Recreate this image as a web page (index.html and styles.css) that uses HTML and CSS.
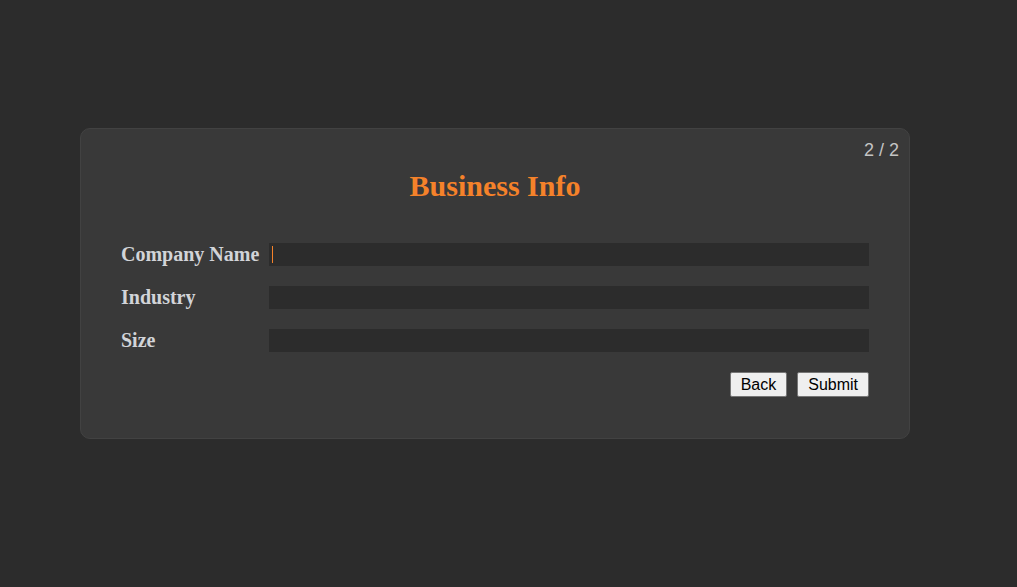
FILE: index.html
```html
<!DOCTYPE html>
<html>
<head>
<meta charset="utf-8">
<link rel="stylesheet" href="styles.css">
</head>
<body>
<div class="card">
  <div class="step">2 / 2</div>
  <h2 class="title">Business Info</h2>
  <form class="form">
    <div class="row"><label class="label">Company Name</label><input class="field field-focus" type="text" autofocus></div>
    <div class="row"><label class="label">Industry</label><input class="field" type="text"></div>
    <div class="row"><label class="label">Size</label><input class="field" type="text"></div>
    <div class="actions">
      <button type="button" class="btn">Back</button>
      <button type="button" class="btn">Submit</button>
    </div>
  </form>
</div>
</body>
</html>
```
FILE: styles.css
```css
html, body {
  margin: 0;
  padding: 0;
  background: #2c2c2c;
  font-family: "Liberation Serif", "Times New Roman", serif;
}
body {
  padding: 128px 0 0 80px;
}
.card {
  position: relative;
  box-sizing: border-box;
  width: 830px;
  height: 311px;
  padding: 40px;
  background: #393939;
  border: 1px solid #424242;
  border-radius: 10px;
}
.step {
  position: absolute;
  top: 11px;
  right: 10px;
  font-family: "Liberation Sans", Arial, sans-serif;
  font-size: 18px;
  color: #c4c4c4;
}
.title {
  margin: 0 0 40px 0;
  text-align: center;
  font-size: 30px;
  font-weight: bold;
  color: #f5822a;
  line-height: 34px;
}
.form {
  display: flex;
  flex-direction: column;
  gap: 20px;
}
.row {
  display: flex;
  align-items: center;
  height: 23px;
}
.label {
  width: 148px;
  flex: none;
  font-size: 20px;
  font-weight: bold;
  color: #d2d4d8;
  line-height: 23px;
}
.field {
  flex: 1;
  height: 23px;
  box-sizing: border-box;
  border: none;
  outline: none;
  background: #2c2c2c;
  color: #ddd;
  padding: 0 3px;
  caret-color: #f5822a;
  font-size: 16px;
}
.field-focus {
  background: linear-gradient(#f5822a, #f5822a) 3px 3px / 1px 17px no-repeat, #2c2c2c;
}
.actions {
  display: flex;
  justify-content: flex-end;
  gap: 10px;
}
.btn {
  font-family: "Liberation Sans", Arial, sans-serif;
  font-size: 16px;
  height: 25px;
  padding: 0 10px;
  background: #efefef;
  color: #000;
  border: 1px solid #767676;
  border-radius: 2px;
}
```
